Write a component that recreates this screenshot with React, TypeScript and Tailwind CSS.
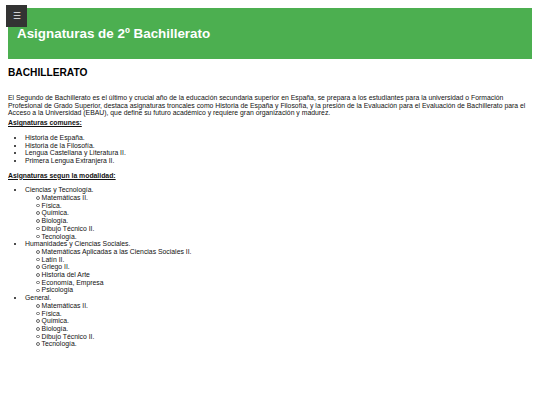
import React from 'react';

const comunes = [
  'Historia de España.',
  'Historia de la Filosofía.',
  'Lengua Castellana y Literatura II.',
  'Primera Lengua Extranjera II.',
];

const modalidades = [
  {
    name: 'Ciencias y Tecnología.',
    items: ['Matemáticas II.', 'Física.', 'Química.', 'Biología.', 'Dibujo Técnico II.', 'Tecnología.'],
  },
  {
    name: 'Humanidades y Ciencias Sociales.',
    items: [
      'Matemáticas Aplicadas a las Ciencias Sociales II.',
      'Latín II.',
      'Griego II.',
      'Historia del Arte',
      'Economía, Empresa',
      'Psicología',
    ],
  },
  {
    name: 'General.',
    items: ['Matemáticas II.', 'Física.', 'Química.', 'Biología.', 'Dibujo Técnico II.', 'Tecnología.'],
  },
];

export default function App() {
  return (
    <div className="relative min-h-[405px] bg-white px-[8px] pt-[8px] text-[6.85px] leading-[7.7px] text-[#111] font-['Liberation_Sans',Arial,sans-serif]">
      <button className="absolute left-[6px] top-[5px] flex h-[22px] w-[21px] items-center justify-center bg-[#333333] text-[9px] leading-none text-[#eee]">
        ☰
      </button>

      <header className="flex h-[51px] items-center bg-[#4caf50] pl-[9px]">
        <h1 className="text-[13.4px] font-bold leading-[16px] text-white">Asignaturas de 2º Bachillerato</h1>
      </header>

      <h2 className="mt-[8px] text-[10.2px] font-bold leading-[12px] text-black">BACHILLERATO</h2>

      <p className="mt-[15px]">
        El Segundo de Bachillerato es el último y crucial año de la educación secundaria superior en España, se
        prepara a los estudiantes para la universidad o Formación Profesional de Grado Superior, destaca asignaturas
        troncales como Historia de España y Filosofía, y la presión de la Evaluación para el Evaluación de
        Bachillerato para el Acceso a la Universidad (EBAU), que define su futuro académico y requiere gran
        organización y madurez.
      </p>

      <h3 className="mt-[2px] font-bold underline">Asignaturas comunes:</h3>
      <ul className="mt-[7px] list-disc pl-[17px]">
        {comunes.map((c) => (
          <li key={c}>{c}</li>
        ))}
      </ul>

      <h3 className="mt-[7px] font-bold underline">Asignaturas segun la modalidad:</h3>
      <ul className="mt-[7px] list-disc pl-[17px]">
        {modalidades.map((m) => (
          <li key={m.name}>
            {m.name}
            <ul className="pl-[11px]">
              {m.items.map((i) => (
                <li key={i} className="flex items-center gap-[2px]">
                  <span className="h-[3.6px] w-[3.6px] shrink-0 rounded-full border-[0.6px] border-[#666]" />
                  <span>{i}</span>
                </li>
              ))}
            </ul>
          </li>
        ))}
      </ul>
    </div>
  );
}
